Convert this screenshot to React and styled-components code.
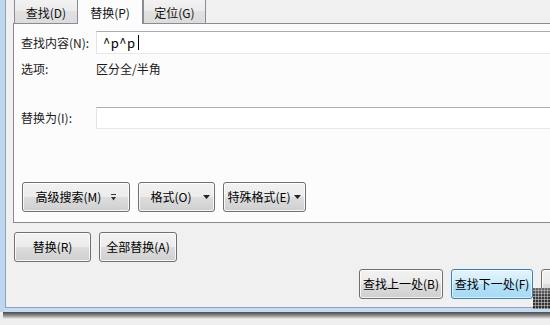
import React from "react";
import styled, { createGlobalStyle } from "styled-components";

const GlobalStyle = createGlobalStyle`
  html, body {
    margin: 0;
    padding: 0;
  }
  body {
    background: #efefef;
    font-family: "Noto Sans CJK SC", "Noto Sans", sans-serif;
    font-size: 12px;
    color: #000;
  }
  * {
    box-sizing: border-box;
  }
`;

const Screen = styled.div`
  position: relative;
  width: 550px;
  height: 325px;
  overflow: hidden;
`;

const Window = styled.div`
  width: 640px;
  margin-top: -4px;
  border-left: 5px solid #bed6ef;
  padding-bottom: 4px;
  background: #c4dbf2;
`;

const Shadow = styled.div`
  width: 640px;
  height: 7px;
  margin-left: 3px;
  background: linear-gradient(#4a4a4a, #8c8c8c 50%, #efefef);
`;

const Body = styled.div`
  background: #f0f0f0;
  border-left: 1px solid #8ea4bc;
  border-bottom: 1px solid #8ea4bc;
  padding: 0 19px 8px 7px;
`;

const TabStrip = styled.div`
  display: flex;
  align-items: flex-end;
  height: 27px;
  padding-left: 1px;
`;

const Tab = styled.div`
  position: relative;
  width: ${(p) => p.$w}px;
  height: ${(p) => (p.$active ? 28 : 25)}px;
  margin-left: ${(p) => (p.$active ? -1 : 0)}px;
  margin-bottom: ${(p) => (p.$active ? -1 : 0)}px;
  padding-top: ${(p) => (p.$active ? 8 : 6)}px;
  border: 1px solid #898c95;
  border-bottom: none;
  border-radius: 2px 2px 0 0;
  background: ${(p) =>
    p.$active
      ? "#fcfcfc"
      : "linear-gradient(#f3f3f3, #ebebeb 50%, #e1e1e1 51%, #dcdcdc)"};
  z-index: ${(p) => (p.$active ? 1 : 0)};
  line-height: 16px;
  text-align: center;
  color: #111;
`;

const Panel = styled.div`
  border: 1px solid #898c95;
  background: #fcfcfc;
  padding: 7px 8px 10px 7px;
`;

const Field = styled.div`
  display: flex;
  align-items: center;
  height: ${(p) => p.$h || 23}px;
  margin-top: ${(p) => p.$top || 0}px;
`;

const Label = styled.div`
  width: 75px;
  flex-shrink: 0;
  line-height: 16px;
  color: #1a1a1a;
`;

const TextBox = styled.div`
  flex: 1;
  align-self: stretch;
  display: flex;
  align-items: center;
  padding-left: 6px;
  background: #fff;
  border-style: solid;
  border-width: 1px;
  border-color: #abadb3 #dbdfe6 #e3e9ef #e2e3ea;
  font-size: 13px;
  letter-spacing: 0.5px;
  color: #000;
`;

const Caret = styled.span`
  display: inline-block;
  width: 1px;
  height: 15px;
  margin-left: 2px;
  background: #000;
`;

const Value = styled.div`
  line-height: 16px;
  color: #1a1a1a;
`;

const Row = styled.div`
  display: flex;
  gap: 8px;
  padding-left: 1px;
  margin-top: ${(p) => p.$top || 0}px;
  justify-content: ${(p) => (p.$end ? "flex-end" : "flex-start")};
`;

const Button = styled.div`
  display: flex;
  align-items: center;
  justify-content: center;
  gap: ${(p) => (p.$split ? 0 : 10)}px;
  width: ${(p) => p.$w}px;
  height: 30px;
  flex-shrink: 0;
  padding: 0 ${(p) => (p.$split ? 4 : 0)}px 0 0;
  border: 1px solid ${(p) => (p.$primary ? "#3c7fb1" : "#707070")};
  border-radius: 3px;
  background: ${(p) =>
    p.$primary
      ? "linear-gradient(#e5f4fc, #c9ebfb 50%, #b4e2fa 51%, #a6d9f4)"
      : "linear-gradient(#f2f2f2, #ebebeb 50%, #dddddd 51%, #cfcfcf)"};
  box-shadow: inset 0 0 0 1px
    ${(p) => (p.$primary ? "rgba(255,255,255,0.55)" : "rgba(255,255,255,0.8)")};
  color: #000;
  white-space: nowrap;
`;

const ButtonText = styled.span`
  flex: ${(p) => (p.$fill ? 1 : "none")};
  text-align: center;
  line-height: 16px;
`;

const Grip = styled.div`
  position: absolute;
  right: 0;
  top: 288px;
  width: 17px;
  height: 21px;
  background:
    radial-gradient(circle, #b5b5b5 0.9px, transparent 1.2px) 1px 1px / 3px 3px,
    linear-gradient(#6c6c6c, #3a3a3a 40%, #2c2c2c);
`;

const Arrow = () => (
  <svg width="7" height="4" viewBox="0 0 7 4">
    <polygon points="0,0 7,0 3.5,4" fill="#222" />
  </svg>
);

const MoreArrow = () => (
  <svg width="5" height="7" viewBox="0 0 5 7">
    <rect x="0" y="0" width="5" height="1" fill="#333" />
    <polygon points="0,3 5,3 2.5,6.5" fill="#333" />
  </svg>
);

export default function App() {
  return (
    <>
      <GlobalStyle />
      <Screen>
        <Window>
          <Body>
            <TabStrip>
              <Tab $w={64}>查找(D)</Tab>
              <Tab $w={66} $active>
                替换(P)
              </Tab>
              <Tab $w={63}>定位(G)</Tab>
            </TabStrip>
            <Panel>
              <Field>
                <Label>查找内容(N):</Label>
                <TextBox>
                  ^p^p
                  <Caret />
                </TextBox>
              </Field>
              <Field $h={16} $top={7}>
                <Label>选项:</Label>
                <Value>区分全/半角</Value>
              </Field>
              <Field $h={22} $top={30}>
                <Label>替换为(I):</Label>
                <TextBox />
              </Field>
              <Row $top={53}>
                <Button $w={108}>
                  <ButtonText>高级搜索(M)</ButtonText>
                  <MoreArrow />
                </Button>
                <Button $w={77} $split>
                  <ButtonText $fill>格式(O)</ButtonText>
                  <Arrow />
                </Button>
                <Button $w={83} $split>
                  <ButtonText $fill>特殊格式(E)</ButtonText>
                  <Arrow />
                </Button>
              </Row>
            </Panel>
            <Row $top={9}>
              <Button $w={77}>
                <ButtonText>替换(R)</ButtonText>
              </Button>
              <Button $w={78}>
                <ButtonText>全部替换(A)</ButtonText>
              </Button>
            </Row>
            <Row $top={7} $end>
              <Button $w={84}>
                <ButtonText>查找上一处(B)</ButtonText>
              </Button>
              <Button $w={82} $primary>
                <ButtonText>查找下一处(F)</ButtonText>
              </Button>
              <Button $w={80} />
            </Row>
          </Body>
        </Window>
        <Shadow />
        <Grip />
      </Screen>
    </>
  );
}
